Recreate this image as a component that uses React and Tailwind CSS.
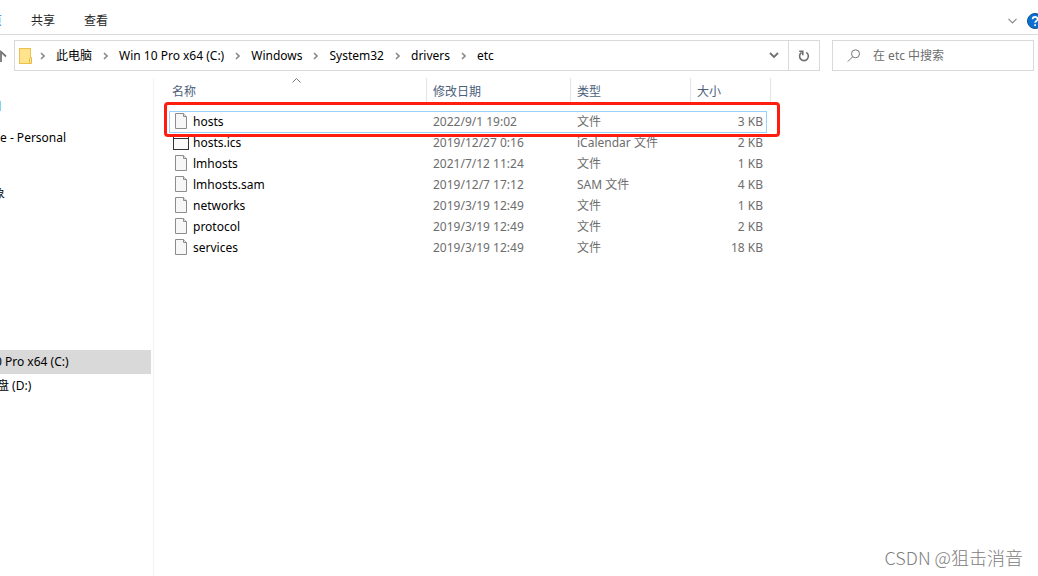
import { useState } from 'react';

const archivos = [
  { nombre: 'hosts', fecha: '2022/9/1 19:02', tipo: '文件', peso: '3 KB' },
  { nombre: 'hosts.ics', fecha: '2019/12/27 0:16', tipo: 'iCalendar 文件', peso: '2 KB' },
  { nombre: 'lmhosts', fecha: '2021/7/12 11:24', tipo: '文件', peso: '1 KB' },
  { nombre: 'lmhosts.sam', fecha: '2019/12/7 17:12', tipo: 'SAM 文件', peso: '4 KB' },
  { nombre: 'networks', fecha: '2019/3/19 12:49', tipo: '文件', peso: '1 KB' },
  { nombre: 'protocol', fecha: '2019/3/19 12:49', tipo: '文件', peso: '2 KB' },
  { nombre: 'services', fecha: '2019/3/19 12:49', tipo: '文件', peso: '18 KB' },
];

const ruta = ['此电脑', 'Win 10 Pro x64 (C:)', 'Windows', 'System32', 'drivers', 'etc'];

function Chevron() {
  return (
    <svg width="5" height="8" viewBox="0 0 5 8" fill="none" stroke="#8a8a8a" strokeWidth="1.6" className="shrink-0">
      <path d="M1 1l3 3-3 3" />
    </svg>
  );
}

function FolderIcon() {
  return (
    <svg width="13" height="16" viewBox="0 0 13 16" className="shrink-0">
      <rect x="0.5" y="0.5" width="11" height="15" fill="#ffe38d" stroke="#ecc04a" />
      <path d="M10.5 15.5v-5l1-1h1v6z" fill="#fde9a5" stroke="#e6b93f" />
    </svg>
  );
}

function FileIcon() {
  return (
    <svg width="16" height="17" viewBox="0 0 16 17" className="shrink-0">
      <path d="M2.5.5h8l3 3v12h-11z" fill="#f7f7f7" stroke="#8c8c8c" />
      <path d="M10.5.5v3h3" fill="#e2e2e2" stroke="#8c8c8c" />
    </svg>
  );
}

function CalendarIcon() {
  return (
    <svg width="16" height="17" viewBox="0 0 16 17" className="shrink-0">
      <rect x="0.5" y="1.5" width="15" height="14" fill="#fafafa" stroke="#333" />
      <path d="M1 4.5h14" stroke="#333" />
    </svg>
  );
}

export default function App() {
  const [seleccion, setSeleccion] = useState('hosts');
  const [busqueda, setBusqueda] = useState('');

  return (
    <div className="relative flex flex-col min-h-screen overflow-hidden bg-white text-xs text-black font-['Noto_Sans','Noto_Sans_CJK_SC',sans-serif]">
      {/* Cinta */}
      <header className="flex items-center h-[35px] pt-2 border-b border-[#dadbdc] text-[#262626]">
        <nav className="flex flex-1 gap-[29px]">
          <button className="-ml-[10px] text-[#2b7cd3]">页</button>
          <button>共享</button>
          <button>查看</button>
        </nav>
        <button aria-label="展开功能区" className="mr-[10px]">
          <svg width="9" height="6" viewBox="0 0 9 6" fill="none" stroke="#8a8a8a" strokeWidth="1.2">
            <path d="M.5.8l4 4 4-4" />
          </svg>
        </button>
        <button aria-label="帮助" className="-mr-[5px]">
          <svg width="16" height="16" viewBox="0 0 16 16" fill="none">
            <circle cx="8" cy="8" r="7.5" fill="#0a6fd0" stroke="#0b4f98" />
            <path d="M5.6 6.2c0-3.2 5-3.2 5 0 0 1.8-2.5 1.8-2.5 3.6M8.1 11.2v1.8" stroke="#fff" strokeWidth="1.7" />
          </svg>
        </button>
      </header>

      {/* Barra de direcciones */}
      <div className="flex items-center pt-[5px] pr-1">
        <button aria-label="上移" className="w-[14px]">
          <svg width="7" height="12" viewBox="0 0 7 12" fill="none" stroke="#757575" strokeWidth="1.8">
            <path d="M1 12V1.5M0 .8l6 5.7" />
          </svg>
        </button>
        <div className="flex flex-1 items-center h-[31px] border border-[#d9d9d9]">
          <div className="flex flex-1 items-center pl-1">
            <FolderIcon />
            {ruta.map((r) => (
              <div key={r} className="flex items-center gap-[11px] pl-[11px] first-of-type:pl-2">
                <Chevron />
                <button className="whitespace-nowrap">{r}</button>
              </div>
            ))}
          </div>
          <button aria-label="历史记录" className="px-[9px]">
            <svg width="10" height="7" viewBox="0 0 10 7" fill="none" stroke="#707070" strokeWidth="1.8">
              <path d="M1 1l4 4 4-4" />
            </svg>
          </button>
          <button aria-label="刷新" className="flex items-center justify-center w-[31px] h-full border-l border-[#d9d9d9]">
            <svg width="12" height="12" viewBox="0 0 12 12" fill="none" stroke="#707070" strokeWidth="1.6">
              <path d="M8.2 2.4a4.4 4.4 0 1 1-4.6.1M1.2 1.3h3.6v3.9" />
            </svg>
          </button>
        </div>
        <label className="flex items-center gap-3 w-[202px] h-[31px] ml-3 pl-[14px] border border-[#d9d9d9]">
          <svg width="14" height="14" viewBox="0 0 14 14" fill="none" stroke="#777" className="shrink-0">
            <circle cx="8.5" cy="4.8" r="4" />
            <path d="M5.6 7.8L.8 12.6" />
          </svg>
          <input
            type="text"
            aria-label="搜索"
            value={busqueda}
            onChange={(e) => setBusqueda(e.target.value)}
            placeholder="在 etc 中搜索"
            className="w-full min-w-0 outline-none placeholder:text-[#6d6d6d]"
          />
        </label>
      </div>

      <div className="flex flex-1 pt-[7px]">
        {/* Panel de navegacion */}
        <aside className="w-[154px] shrink-0 pt-4 pr-[2px] overflow-hidden border-r border-[#f3f3f3]">
          <div className="flex items-center h-6 mb-2">
            <span className="w-px h-[10px] bg-[#7fd3f7]" />
          </div>
          <button className="flex items-center w-full h-6">e - Personal</button>
          <button className="flex items-center w-full h-6 mt-8">
            <span className="-ml-[7px]">象</span>
          </button>
          <button className="flex items-center w-full h-6 mt-36 bg-[#d9d9d9]">
            <span className="-ml-[5px]">0 Pro x64 (C:)</span>
          </button>
          <button className="flex items-center w-full h-6">
            <span className="-ml-[3px]">盘 (D:)</span>
          </button>
        </aside>

        {/* Lista de archivos */}
        <main className="relative flex-1 pl-[15px]">
          <table className="table-fixed w-[602px] border-separate border-spacing-0 text-left text-[#6d6d6d]">
            <thead className="text-[#4c607a]">
              <tr className="h-[24px]">
                <th className="relative w-[258px] p-0 pl-[3px] pt-[3px] font-normal border-r border-[#e5e5e5]">
                  名称
                  <svg width="9" height="5" viewBox="0 0 9 5" fill="none" stroke="#777" className="absolute top-0 left-[123px]">
                    <path d="M.5 4.5l4-4 4 4" />
                  </svg>
                </th>
                <th className="w-[144px] p-0 pl-[6px] pt-[3px] font-normal border-r border-[#e5e5e5]">修改日期</th>
                <th className="w-[120px] p-0 pl-[6px] pt-[3px] font-normal border-r border-[#e5e5e5]">类型</th>
                <th className="w-[80px] p-0 pl-[6px] pt-[3px] font-normal border-r border-[#e5e5e5]">大小</th>
              </tr>
            </thead>
            <tbody className="before:block before:h-[9px]">
              {archivos.map((a) => (
                <tr key={a.nombre} onClick={() => setSeleccion(a.nombre)} className="relative h-[21px]">
                  <td className="p-0 pl-1 text-black">
                    {seleccion === a.nombre && (
                      <span className="absolute top-0 -bottom-px left-0 right-1 border border-[#99d1ff]" />
                    )}
                    <div className="flex items-center gap-1">
                      {a.nombre.endsWith('.ics') ? <CalendarIcon /> : <FileIcon />}
                      {a.nombre}
                    </div>
                  </td>
                  <td className="p-0 pl-[6px]">{a.fecha}</td>
                  <td className="p-0 pl-[6px]">{a.tipo}</td>
                  <td className="p-0 pr-2 text-right">{a.peso}</td>
                </tr>
              ))}
            </tbody>
          </table>
          <div className="absolute top-6 left-[10px] w-[616px] h-[35px] border-3 border-[#ff1d10] rounded-sm pointer-events-none" />
        </main>
      </div>

      <p className="absolute right-[15px] bottom-[5px] text-lg font-light text-[#808080] font-['Noto_Sans_CJK_SC',sans-serif]">CSDN @狙击消音</p>
    </div>
  );
}
